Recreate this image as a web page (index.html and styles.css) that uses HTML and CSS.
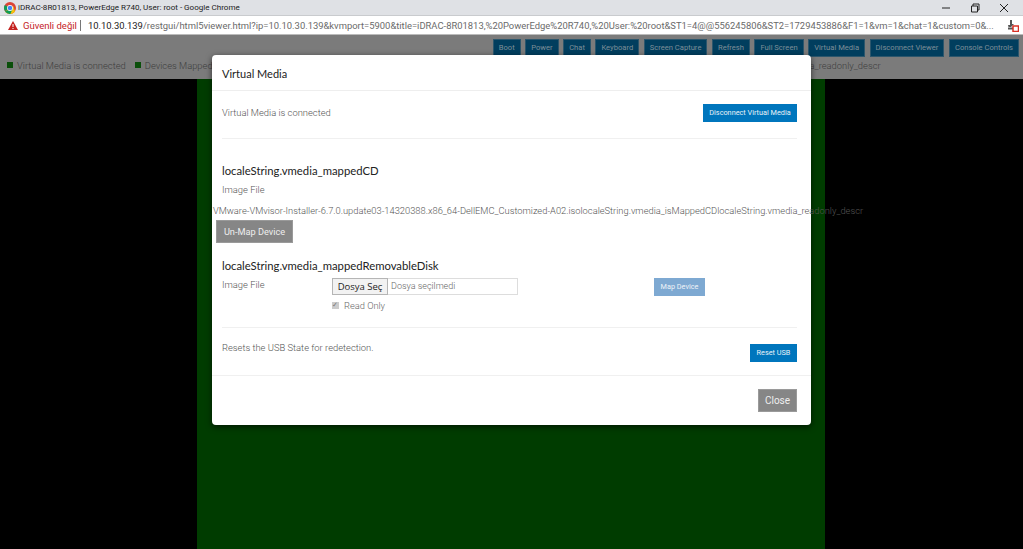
FILE: index.html
```html
<!DOCTYPE html>
<html lang="en">
<head>
<meta charset="utf-8">
<title>iDRAC-8R01813</title>
<link rel="stylesheet" href="styles.css">
</head>
<body>
<div class="titlebar">
  <svg class="chrome-logo" width="12" height="12" viewBox="0 0 14 14"><circle cx="7" cy="7" r="7" fill="#db4437"/><path d="M7 7 L1 10.5 A7 7 0 0 1 1 3.5Z" fill="#0f9d58"/><path d="M7 7 L1.2 11 A7 7 0 0 0 12.8 11 L11 5Z" fill="#f4c20d"/><path d="M1 10.5 A7 7 0 0 0 7.5 14 L10 8Z" fill="#0f9d58"/><circle cx="7" cy="7" r="3.4" fill="#fff"/><circle cx="7" cy="7" r="2.6" fill="#4285f4"/></svg>
  <span class="title-text">iDRAC-8R01813, PowerEdge R740, User: root - Google Chrome</span>
  <div class="win-controls">
    <svg width="10" height="10" viewBox="0 0 10 10"><path d="M1 5H9" stroke="#222" stroke-width="1"/></svg>
    <svg width="10" height="10" viewBox="0 0 10 10"><path d="M1.5 3H7.5V9H1.5ZM3 3V1H9V7H7.5" fill="none" stroke="#222"/></svg>
    <svg width="10" height="10" viewBox="0 0 10 10"><path d="M1 1L9 9M9 1L1 9" stroke="#222"/></svg>
  </div>
</div>
<div class="addressbar">
  <svg width="10" height="9" viewBox="0 0 10 9"><path d="M5 0L10 9H0Z" fill="#c5221f"/><path d="M5 3V6M5 7V8" stroke="#fff"/></svg>
  <span class="insecure">Güvenli değil</span>
  <span class="sep"></span>
  <span class="url"><b>10.10.30.139</b>/restgui/html5viewer.html?ip=10.10.30.139&amp;kvmport=5900&amp;title=iDRAC-8R01813,%20PowerEdge%20R740,%20User:%20root&amp;ST1=4@@556245806&amp;ST2=1729453886&amp;F1=1&amp;vm=1&amp;chat=1&amp;custom=0&amp;...</span>
  <svg class="blocked" width="12" height="13" viewBox="0 0 12 13"><path d="M3 1H5V5H7L4 8H1.5L1 6H3Z" fill="#555"/><rect x="1" y="8.5" width="6" height="2" fill="#555"/><rect x="6" y="7" width="5.5" height="5.5" fill="#fff" stroke="#d93025" stroke-width="1.5"/></svg>
</div>
<div class="page">
  <div class="viewer-head">
    <nav class="toolbar">
      <span class="tool">Boot</span>
      <span class="tool">Power</span>
      <span class="tool">Chat</span>
      <span class="tool">Keyboard</span>
      <span class="tool">Screen Capture</span>
      <span class="tool">Refresh</span>
      <span class="tool">Full Screen</span>
      <span class="tool">Virtual Media</span>
      <span class="tool">Disconnect Viewer</span>
      <span class="tool">Console Controls</span>
    </nav>
    <div class="status">
      <span class="dot"></span><span>Virtual Media is connected</span>
      <span class="dot dot-second"></span><span>Devices Mapped</span>
      <span class="status-tail">vmedia_readonly_descr</span>
    </div>
  </div>
  <div class="canvas-wrap"><div class="canvas"></div></div>

  <section class="modal">
    <h2 class="modal-title">Virtual Media</h2>
    <div class="modal-body">
      <div class="row row-connected">
        <span class="muted">Virtual Media is connected</span>
        <span class="btn btn-blue btn-disconnect">Disconnect Virtual Media</span>
      </div>
      <h3 class="device-title first">localeString.vmedia_mappedCD</h3>
      <div class="muted image-label">Image File</div>
      <div class="overflow-line">VMware-VMvisor-Installer-6.7.0.update03-14320388.x86_64-DellEMC_Customized-A02.isolocaleString.vmedia_isMappedCDlocaleString.vmedia_readonly_descr</div>
      <span class="btn btn-gray btn-unmap">Un-Map Device</span>
      <h3 class="device-title second">localeString.vmedia_mappedRemovableDisk</h3>
      <div class="map-row">
        <span class="muted map-label">Image File</span>
        <div class="map-input">
          <div class="file"><span class="file-btn">Dosya Seç</span><span class="file-name">Dosya seçilmedi</span></div>
          <label class="readonly"><span class="check">✓</span>Read Only</label>
        </div>
        <span class="btn btn-faded">Map Device</span>
      </div>
      <div class="row row-reset">
        <span class="muted">Resets the USB State for redetection.</span>
        <span class="btn btn-blue btn-reset">Reset USB</span>
      </div>
    </div>
    <footer class="modal-foot"><span class="btn btn-gray btn-close">Close</span></footer>
  </section>
</div>
</body>
</html>
```
FILE: styles.css
```css
* { box-sizing: border-box; }
html, body { margin: 0; height: 100%; overflow: hidden; }
body { font-family: Roboto, "Liberation Sans", sans-serif; width: 1023px; height: 549px; background: #000; }

.titlebar { height: 16px; background: #dfe1e5; display: flex; align-items: center; padding-left: 4px; border-bottom: 1px solid #c9cbce; font-family: Roboto, sans-serif; }
.chrome-logo { flex: none; margin-right: 2px; }
.title-text { font-size: 8.05px; color: #222; white-space: nowrap; }
.win-controls { margin-left: auto; display: flex; gap: 19px; padding-right: 14px; }

.addressbar { height: 19px; background: #fff; display: flex; align-items: center; padding-left: 8px; font-family: Roboto, sans-serif; font-size: 9.6px; border-bottom: 1px solid #bbb; white-space: nowrap; }
.insecure { color: #c5221f; margin-left: 5px; font-size: 9.5px; }
.sep { width: 1px; height: 11px; background: #777; margin: 0 7px 0 3px; }
.url { color: #6a6a6a; font-size: 9.42px; flex: none; width: 908px; }
.url b { color: #222; font-weight: 400; }
.blocked { margin-left: 11px; flex: none; }

.page { position: relative; height: 514px; background: #000; }
.viewer-head { height: 44px; background: #7b7b7b; position: relative; }
.toolbar { display: flex; justify-content: flex-end; gap: 4.55px; padding: 4px 4px 0 0; }
.tool { height: 18px; background: #013e5e; border: 1px solid #2c566c; color: #7d8e98; font-size: 7.6px; line-height: 16px; padding: 0 5px; white-space: nowrap; }
.status { display: flex; align-items: center; height: 14px; margin-top: 1px; padding-left: 7px; color: #3e3e3e; font-size: 9.4px; font-weight: 300; white-space: nowrap; }
.dot { width: 6px; height: 6px; background: #0a4f0a; margin-right: 4px; }
.dot-second { margin-left: 9px; margin-right: 4px; }
.status-tail { margin-left: 572px; }

.canvas-wrap { height: 470px; display: flex; justify-content: flex-start; padding-left: 197px; }
.canvas { width: 628px; height: 100%; background: #003c00; }

.modal { position: absolute; left: 212px; top: 20px; width: 599px; height: 370px; background: #fff; border-radius: 4px; box-shadow: 0 2px 6px rgba(0,0,0,.6); color: #666; display: flex; flex-direction: column; }
.modal-title { flex: none; margin: 0; height: 36px; padding: 12px 10px 0; font-family: Lato, sans-serif; font-weight: 400; font-size: 11px; color: #222; border-bottom: 1px solid #eee; }
.modal-body { flex: none; height: 284px; padding: 0 14px 0 10px; position: relative; }
.muted { font-size: 9.4px; font-weight: 300; color: #555; }
.row { display: flex; justify-content: space-between; }
.row-connected { height: 48px; align-items: center; padding-bottom: 4px; border-bottom: 1px solid #f0f0f0; }
.row-reset { height: 48px; border-top: 1px solid #f0f0f0; align-items: flex-start; padding-top: 14px; }
.btn { display: inline-block; white-space: nowrap; text-align: center; }
.btn-blue { background: #0076bd; color: #e8f2f8; font-size: 7.3px; height: 18px; line-height: 18px; }
.btn-disconnect { width: 94px; }
.btn-reset { width: 47px; margin-top: 2px; }
.device-title { margin: 0; font-family: Lato, sans-serif; font-weight: 400; font-size: 11.3px; color: #222; line-height: 14px; }
.first { margin-top: 25px; }
.image-label { margin-top: 5px; line-height: 14px; }
.overflow-line { margin: 8px 0 0 -9px; width: 660px; font-size: 9.34px; font-weight: 300; line-height: 12px; white-space: nowrap; color: #555; }
.btn-gray { background: #868686; color: #eee; border: 1px solid #9a9a9a; }
.btn-unmap { display: block; width: 77px; height: 23px; margin: 3px 0 0 -6px; font-size: 9.2px; line-height: 21px; }
.second { margin-top: 16px; }
.map-row { display: flex; align-items: flex-start; margin-top: 5px; height: 49px; }
.map-label { width: 110px; line-height: 14px; }
.map-input { width: 186px; }
.file { display: flex; height: 17px; border: 1px solid #ddd; align-items: stretch; }
.file-btn { width: 56px; background: #f2f2f2; color: #222; font-family: "Open Sans", sans-serif; font-size: 9.5px; line-height: 15px; text-align: center; margin: -1px 0 -1px -1px; border: 1px solid #b5b5b5; }
.file-name { padding-left: 3px; font-size: 9px; font-weight: 300; line-height: 15px; }
.readonly { display: flex; align-items: center; margin-top: 5px; font-size: 9.3px; font-weight: 300; }
.check { width: 7px; height: 7px; background: #ccc; color: #777; font-size: 7px; line-height: 7px; margin-right: 5px; }
.btn-faded { background: #7ea9d2; color: #eef3f8; font-size: 7.3px; width: 51px; height: 18px; line-height: 18px; margin: 0 0 0 136px; }
.modal-foot { flex: none; height: 50px; border-top: 1px solid #f0f0f0; display: flex; justify-content: flex-end; padding: 13px 14px 0 0; }
.btn-close { width: 39px; height: 23px; font-size: 10px; line-height: 21px; }
```
